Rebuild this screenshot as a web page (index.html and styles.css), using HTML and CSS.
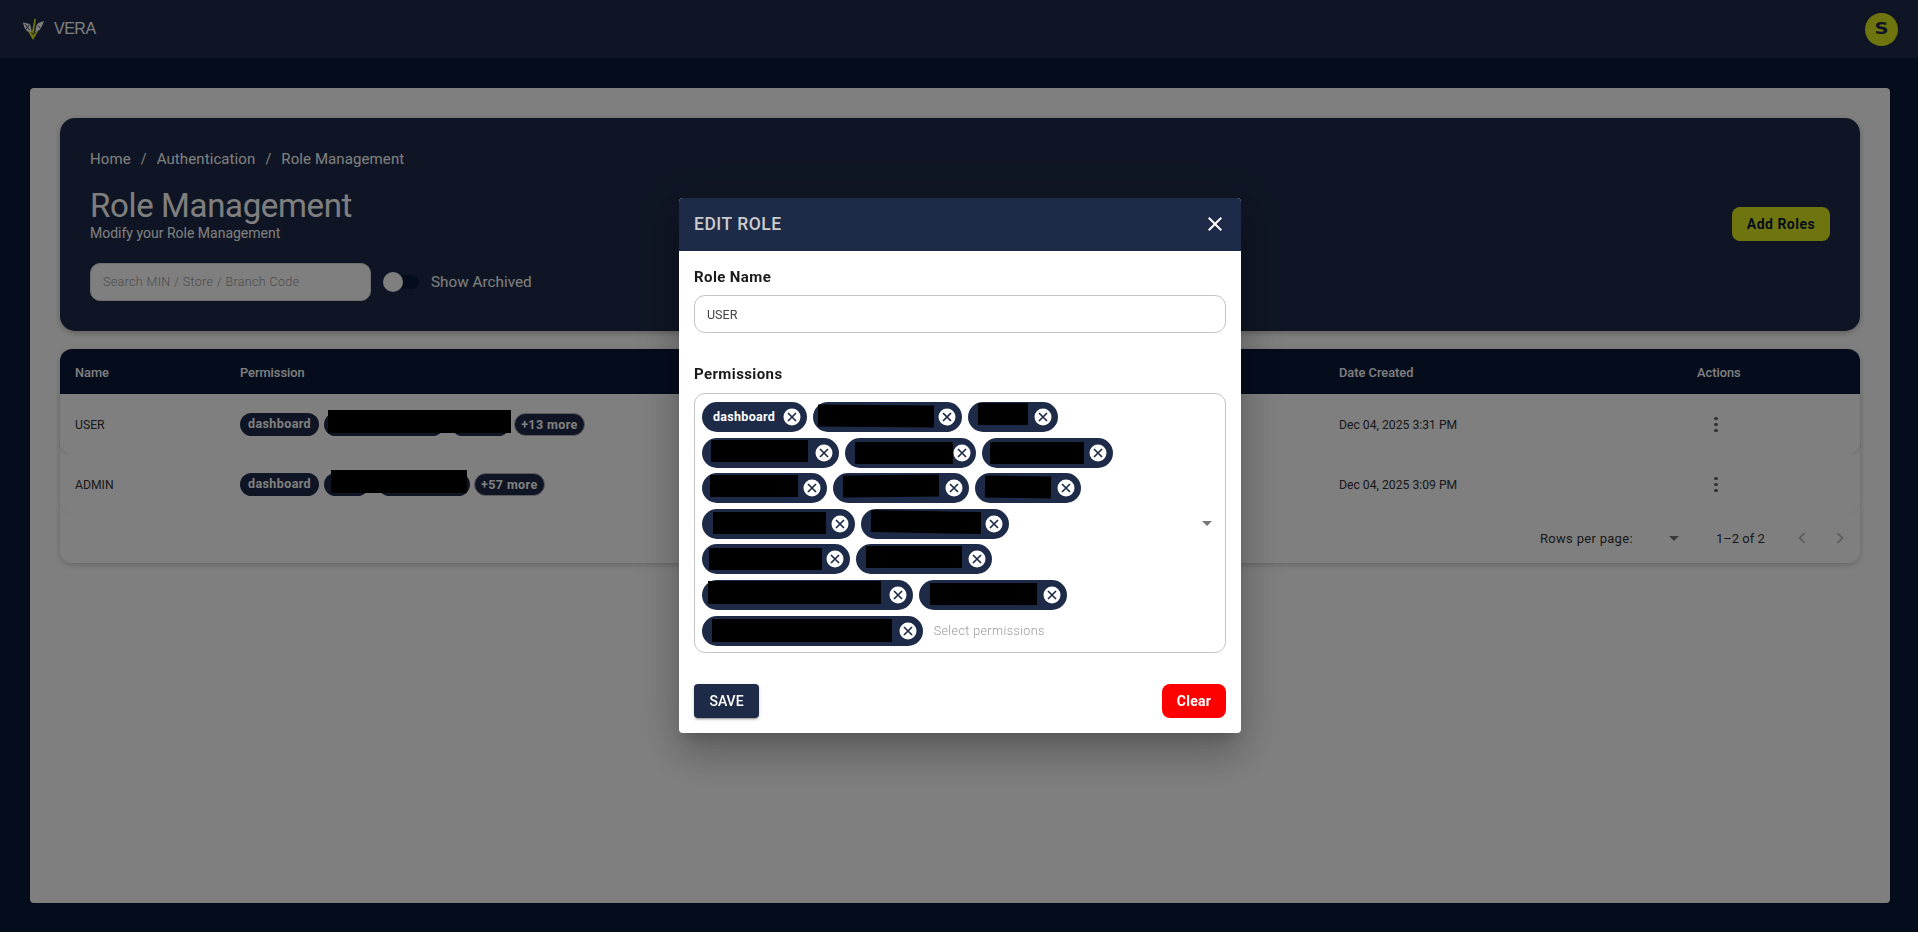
FILE: index.html
```html
<!DOCTYPE html>
<html lang="en">
<head>
<meta charset="utf-8">
<title>Role Management</title>
<link rel="stylesheet" href="styles.css">
</head>
<body>
<header class="topbar">
  <div class="brand">
    <svg class="logo" viewBox="0 0 22 22" aria-hidden="true">
      <path d="M1 4.5 L8 6 L10 14.5 L5.5 13.5 L2.5 10 Z" fill="#fff"/>
      <path d="M22 3 L16.5 5 L14.5 7 L13 14.5 L17.5 12 L20 8 Z" fill="#fff"/>
      <path d="M5.5 12.5 L9 14.5 L11 17 L13.5 14.5 L17 11.5 L11 22 Z" fill="#dfe81c"/>
      <path d="M12.5 .5 L14 1 L11.6 16 L9.8 14.5 Z" fill="#dfe81c"/>
      <path d="M3 6 L7.5 12 M7.5 6.5 L4 11 M16 7.5 L18 10" stroke="#1e2b48" stroke-width=".9" fill="none"/>
    </svg>
    <span class="brand-name">VERA</span>
  </div>
  <div class="avatar"><span>S</span></div>
</header>

<main class="page">
  <section class="panel">
    <div class="hero">
      <div class="hero-main">
        <nav class="crumbs"><span>Home</span><span class="sep">/</span><span>Authentication</span><span class="sep">/</span><span>Role Management</span></nav>
        <h1 class="title">Role Management</h1>
        <p class="subtitle">Modify your Role Management</p>
        <div class="filters">
          <div class="search">Search MIN / Store / Branch Code</div>
          <div class="switch"><span class="switch-track"></span><span class="switch-thumb"></span></div>
          <span class="switch-label">Show Archived</span>
        </div>
      </div>
      <button class="add-btn">Add Roles</button>
    </div>

    <div class="table">
      <div class="row head">
        <div>Name</div><div>Permission</div><div>Date Created</div><div>Actions</div>
      </div>
      <div class="row body-row">
        <div>USER</div>
        <div class="mini-chips">
          <span class="mini">dashboard</span>
          <span class="mini blank" style="width:120.5px"></span>
          <span class="mini blank" style="width:59px;margin-left:2.6px"></span>
          <span class="mini more">+13 more</span>
          <span class="mini-redact" style="left:88px;width:183px"></span>
        </div>
        <div>Dec 04, 2025 3:31 PM</div>
        <div class="kebab-cell"><span class="kebab"><i></i><i></i><i></i></span></div>
      </div>
      <div class="row body-row second">
        <div>ADMIN</div>
        <div class="mini-chips">
          <span class="mini">dashboard</span>
          <span class="mini blank" style="width:45.5px"></span>
          <span class="mini blank" style="width:92px;margin-left:4.5px"></span>
          <span class="mini more">+57 more</span>
          <span class="mini-redact" style="left:91px;width:136px"></span>
        </div>
        <div>Dec 04, 2025 3:09 PM</div>
        <div class="kebab-cell"><span class="kebab"><i></i><i></i><i></i></span></div>
      </div>
      <div class="pager">
        <span class="pager-label">Rows per page:</span>
        <span class="pager-caret"></span>
        <span class="pager-count">1–2 of 2</span>
        <svg class="pager-arrow" viewBox="0 0 24 24"><path d="M15.4 7.4 14 6l-6 6 6 6 1.4-1.4L10.8 12z"/></svg>
        <svg class="pager-arrow" viewBox="0 0 24 24"><path d="M10 6 8.6 7.4 13.2 12l-4.6 4.6L10 18l6-6z"/></svg>
      </div>
    </div>
  </section>
</main>

<div class="overlay">
  <div class="modal">
    <div class="modal-head">
      <span class="modal-title">EDIT ROLE</span>
      <svg class="modal-close" viewBox="0 0 24 24"><path d="M19 6.41 17.59 5 12 10.59 6.41 5 5 6.41 10.59 12 5 17.59 6.41 19 12 13.41 17.59 19 19 17.59 13.41 12z"/></svg>
    </div>
    <div class="modal-body">
      <label class="field-label">Role Name</label>
      <div class="text-input">USER</div>
      <label class="field-label perm-label">Permissions</label>
      <div class="select">
        <span class="chip named"><span class="chip-text">dashboard</span><svg class="chip-x" viewBox="0 0 18 18"><circle cx="9" cy="9" r="8.5"/><path d="M5 5 13 13M13 5 5 13"/></svg></span>
        <span class="chip" style="width:148.6px"><span class="redact" style="margin-left:5px;width:116px;transform:translateY(-1px) rotate(.4deg)"></span><svg class="chip-x" viewBox="0 0 18 18"><circle cx="9" cy="9" r="8.5"/><path d="M5 5 13 13M13 5 5 13"/></svg></span>
        <span class="chip" style="width:89.7px"><span class="redact" style="margin-left:10px;width:50px;transform:translateY(-3px)"></span><svg class="chip-x" viewBox="0 0 18 18"><circle cx="9" cy="9" r="8.5"/><path d="M5 5 13 13M13 5 5 13"/></svg></span>
        <span class="chip" style="width:136.7px"><span class="redact" style="margin-left:9px;width:97px;transform:translateY(-2px)"></span><svg class="chip-x" viewBox="0 0 18 18"><circle cx="9" cy="9" r="8.5"/><path d="M5 5 13 13M13 5 5 13"/></svg></span>
        <span class="chip" style="width:131.6px"><span class="redact" style="margin-left:10px;width:98px"></span><svg class="chip-x" viewBox="0 0 18 18"><circle cx="9" cy="9" r="8.5"/><path d="M5 5 13 13M13 5 5 13"/></svg></span>
        <span class="chip" style="width:131px"><span class="redact" style="margin-left:8px;width:94px"></span><svg class="chip-x" viewBox="0 0 18 18"><circle cx="9" cy="9" r="8.5"/><path d="M5 5 13 13M13 5 5 13"/></svg></span>
        <span class="chip" style="width:124.5px"><span class="redact" style="margin-left:8px;width:88px;transform:translateY(-2px)"></span><svg class="chip-x" viewBox="0 0 18 18"><circle cx="9" cy="9" r="8.5"/><path d="M5 5 13 13M13 5 5 13"/></svg></span>
        <span class="chip" style="width:136.7px"><span class="redact" style="margin-left:10px;width:96px;transform:translateY(-2px) rotate(-.5deg)"></span><svg class="chip-x" viewBox="0 0 18 18"><circle cx="9" cy="9" r="8.5"/><path d="M5 5 13 13M13 5 5 13"/></svg></span>
        <span class="chip" style="width:105.8px"><span class="redact" style="margin-left:9.5px;width:65.5px;transform:translateY(-1px) rotate(1deg)"></span><svg class="chip-x" viewBox="0 0 18 18"><circle cx="9" cy="9" r="8.5"/><path d="M5 5 13 13M13 5 5 13"/></svg></span>
        <span class="chip" style="width:152.6px"><span class="redact" style="margin-left:11px;width:113px;transform:translateY(-1px)"></span><svg class="chip-x" viewBox="0 0 18 18"><circle cx="9" cy="9" r="8.5"/><path d="M5 5 13 13M13 5 5 13"/></svg></span>
        <span class="chip" style="width:148.6px"><span class="redact" style="margin-left:10px;width:110px;transform:translateY(-2px) rotate(1deg)"></span><svg class="chip-x" viewBox="0 0 18 18"><circle cx="9" cy="9" r="8.5"/><path d="M5 5 13 13M13 5 5 13"/></svg></span>
        <span class="chip" style="width:147.8px"><span class="redact" style="margin-left:7px;width:113px"></span><svg class="chip-x" viewBox="0 0 18 18"><circle cx="9" cy="9" r="8.5"/><path d="M5 5 13 13M13 5 5 13"/></svg></span>
        <span class="chip" style="width:136px"><span class="redact" style="margin-left:10px;width:96px;transform:translateY(-2px)"></span><svg class="chip-x" viewBox="0 0 18 18"><circle cx="9" cy="9" r="8.5"/><path d="M5 5 13 13M13 5 5 13"/></svg></span>
        <span class="chip" style="width:210.7px"><span class="redact" style="margin-left:6px;width:173px;height:23px;transform:translateY(-2px)"></span><svg class="chip-x" viewBox="0 0 18 18"><circle cx="9" cy="9" r="8.5"/><path d="M5 5 13 13M13 5 5 13"/></svg></span>
        <span class="chip" style="width:148px"><span class="redact" style="margin-left:11px;width:107px;transform:translateY(-1px)"></span><svg class="chip-x" viewBox="0 0 18 18"><circle cx="9" cy="9" r="8.5"/><path d="M5 5 13 13M13 5 5 13"/></svg></span>
        <span class="chip" style="width:220.7px"><span class="redact" style="margin-left:10px;width:179.5px;height:23px"></span><svg class="chip-x" viewBox="0 0 18 18"><circle cx="9" cy="9" r="8.5"/><path d="M5 5 13 13M13 5 5 13"/></svg></span>
        <span class="placeholder">Select permissions</span>
        <span class="select-caret"></span>
      </div>
      <div class="modal-actions">
        <button class="save-btn">SAVE</button>
        <button class="clear-btn">Clear</button>
      </div>
    </div>
  </div>
</div>
</body>
</html>
```

FILE: styles.css
```css
* { box-sizing: border-box; }
html, body { margin: 0; height: 100%; }
body {
  width: 1918px;
  height: 932px;
  overflow: hidden;
  background: #0a1838;
  font-family: Roboto, "Liberation Sans", sans-serif;
  color: #222;
  display: flex;
  flex-direction: column;
}

/* top bar */
.topbar {
  height: 58px;
  flex: none;
  background: #1e2b48;
  display: flex;
  align-items: center;
  justify-content: space-between;
  padding: 0 20px 0 22px;
}
.brand { display: flex; align-items: center; gap: 10px; }
.logo { width: 22px; height: 22px; display: block; }
.brand-name {
  font-family: "Liberation Sans", Arial, sans-serif;
  font-size: 16px;
  letter-spacing: -0.5px;
  color: #fff;
}
.avatar {
  width: 33px;
  height: 33px;
  border-radius: 50%;
  background: #dfeb1c;
  color: #1e2b48;
  display: flex;
  align-items: center;
  justify-content: center;
  font-family: "DejaVu Sans", sans-serif;
  font-weight: 700;
  font-size: 15px;
}
.avatar span { display: block; transform: scaleX(1.3); }

/* page */
.page { flex: 1; padding: 30px 28px 29px 30px; min-height: 0; }
.panel {
  height: 100%;
  background: #fff;
  border-radius: 4px;
  padding: 30px;
}
.hero {
  height: 213px;
  background: #1e2b48;
  border-radius: 15px;
  padding: 30px;
  display: flex;
  justify-content: space-between;
  align-items: center;
  color: #fff;
  box-shadow: 0 2px 6px rgba(0,0,0,.25);
}
.crumbs {
  height: 22px;
  display: flex;
  align-items: center;
  gap: 10px;
  font-size: 15px;
  letter-spacing: .1px;
  color: #fff;
}
.sep { font-size: 14px; }
.title {
  margin: 18px 0 0;
  font-size: 33px;
  line-height: 36px;
  font-weight: 400;
  letter-spacing: -0.35px;
  color: #fff;
}
.subtitle { margin: 0; font-size: 14px; line-height: 18px; color: #fff; }
.filters { display: flex; align-items: center; margin-top: 21px; height: 38px; }
.search {
  width: 281px;
  height: 38px;
  background: #fff;
  border-radius: 10px;
  border: 1px solid #ddd;
  color: #999;
  font-size: 12.5px;
  font-weight: 300;
  letter-spacing: .35px;
  line-height: 36px;
  padding-left: 12px;
}
.switch { position: relative; width: 36px; height: 20px; margin-left: 12px; }
.switch-track {
  position: absolute; left: 2px; right: 0; top: 3px; height: 14px;
  border-radius: 7px; background: #0a1838;
}
.switch-thumb {
  position: absolute; left: 0; top: 0; width: 20px; height: 20px;
  border-radius: 50%; background: #fff;
}
.switch-label { margin-left: 12px; font-size: 15.3px; color: #fff; }
.add-btn {
  width: 98px;
  height: 34px;
  margin-top: -1px;
  border: 0;
  border-radius: 8px;
  background: #dfeb1c;
  color: #0a1838;
  font: 700 14px Roboto, sans-serif;
  letter-spacing: .5px;
}

/* table */
.table {
  margin-top: 18px;
  border-radius: 12px;
  box-shadow: 0 2px 6px rgba(0,0,0,.2);
}
.row {
  display: grid;
  grid-template-columns: 165px 1099px 358px 1fr;
  padding: 1px 0 0 15px;
  align-items: center;
  font-size: 12.2px;
}
.head {
  height: 45px;
  background: #0a1838;
  color: #fff;
  font-weight: 500;
  border-radius: 12px 12px 0 0;
  font-size: 12.8px;
}
.body-row {
  height: 60px;
  color: #333;
  background: #fff;
  border-radius: 0 0 12px 12px;
  box-shadow: 0 2px 4px rgba(0,0,0,.12);
}
.body-row.second { height: 59px; padding-top: 2px; box-shadow: 0 1px 1px rgba(0,0,0,.06); }
.mini-chips { position: relative; display: flex; gap: 4.5px; align-items: center; }
.mini {
  height: 23px;
  line-height: 22px;
  border-radius: 12px;
  background: #1e2b48;
  color: #fff;
  font-size: 12.5px;
  font-weight: 700;
  padding: 0 8px;
  letter-spacing: .4px;
}
.mini.blank { margin-right: -.5px; }
.more { border: 1px solid #bbb; padding: 0 6px; margin-left: .5px; }
.mini-redact { position: absolute; top: -3px; height: 23px; background: #000; }
.kebab-cell { padding-left: 17px; }
.kebab { display: flex; flex-direction: column; gap: 2.5px; width: 4px; }
.kebab i { width: 3.5px; height: 3.5px; border-radius: 50%; background: #666; display: block; }
.pager {
  height: 50px;
  display: flex;
  align-items: center;
  justify-content: flex-end;
  font-size: 13px;
  color: #333;
  background: #fff;
  border-radius: 0 0 12px 12px;
  padding-right: 9px;
}
.pager-label { width: 100px; letter-spacing: .3px; }
.pager-caret {
  width: 0; height: 0; margin-left: 29px;
  border: 5px solid transparent; border-top-color: #777; border-bottom: 0;
}
.pager-count { margin-left: 37px; width: 49px; }
.pager-arrow { width: 22px; height: 22px; fill: #bbb; display: block; }
.pager-count + .pager-arrow { margin-left: 26px; }
.pager-arrow + .pager-arrow { margin-left: 16px; }

/* modal */
.overlay {
  position: fixed;
  inset: 0;
  background: rgba(0,0,0,.5);
  display: flex;
  align-items: center;
  justify-content: center;
}
.modal {
  width: 562px;
  height: 535px;
  margin: -1px 0 0 2px;
  background: #fff;
  border-radius: 4px;
  overflow: hidden;
  box-shadow: 0 11px 15px -7px rgba(0,0,0,.2), 0 24px 38px 3px rgba(0,0,0,.14), 0 9px 46px 8px rgba(0,0,0,.12);
}
.modal-head {
  height: 53px;
  background: #1e2b48;
  display: flex;
  align-items: center;
  justify-content: space-between;
  padding: 0 15px 2px;
}
.modal-title { font-size: 17.5px; font-weight: 500; letter-spacing: .5px; color: #ccc; }
.modal-close { width: 24px; height: 24px; fill: #fff; display: block; margin-top: 1px; margin-right: -1px; }
.modal-body { padding: 17px 15px 15px; }
.field-label {
  display: block;
  font-size: 15px;
  line-height: 18px;
  font-weight: 700;
  letter-spacing: .4px;
  color: #1a1a1a;
}
.text-input {
  height: 38px;
  margin-top: 9px;
  border: 1px solid #c4c4c4;
  border-radius: 11px;
  font-size: 12.5px;
  line-height: 38px;
  padding-left: 12px;
  color: #444;
}
.perm-label { margin-top: 32px; }
.select {
  position: relative;
  height: 260px;
  margin-top: 10px;
  border: 1px solid #c4c4c4;
  border-radius: 11px;
  padding: 8px 93px 0 7px;
  display: flex;
  flex-wrap: wrap;
  align-content: flex-start;
  align-items: center;
  gap: 5.6px 6px;
}
.chip {
  height: 30px;
  border-radius: 15px;
  background: #1e2b48;
  display: inline-flex;
  align-items: center;
  justify-content: space-between;
  padding-right: 6px;
}
.named {
  width: 105.4px;
  padding-left: 11px;
  color: #fff;
  font-size: 12.5px;
  font-weight: 700;
  letter-spacing: .3px;
}
.chip-text { margin-top: -2px; }
.redact { display: block; height: 22px; background: #000; flex: none; }
.chip-x { width: 18px; height: 18px; flex: none; }
.chip-x circle { fill: #fff; }
.chip-x path { stroke: #1e2b48; stroke-width: 1.7; fill: none; }
.placeholder { margin-left: 5px; font-size: 12.5px; font-weight: 300; letter-spacing: .4px; color: #999; }
.select-caret {
  position: absolute;
  right: 13px;
  top: 127px;
  width: 0; height: 0;
  border: 5px solid transparent; border-top-color: #777; border-bottom: 0;
}
.modal-actions { display: flex; justify-content: space-between; margin-top: 31px; }
.save-btn {
  width: 65px;
  height: 34px;
  border: 0;
  border-radius: 4px;
  background: #1e2b48;
  color: #fff;
  font: 500 14px Roboto, sans-serif;
  box-shadow: 0 3px 1px -2px rgba(0,0,0,.2), 0 2px 2px rgba(0,0,0,.14), 0 1px 5px rgba(0,0,0,.12);
}
.clear-btn {
  width: 64px;
  height: 34px;
  border: 0;
  border-radius: 8px;
  background: #ff0000;
  color: #fff;
  font: 700 14px Roboto, sans-serif;
  letter-spacing: .3px;
}
```
